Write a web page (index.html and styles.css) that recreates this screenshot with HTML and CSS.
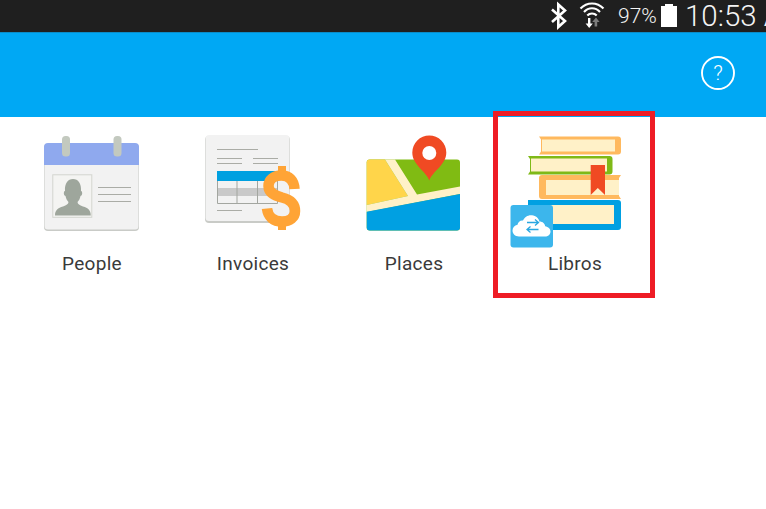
FILE: index.html
```html
<!DOCTYPE html>
<html lang="en">
<head>
<meta charset="utf-8">
<title>Apps</title>
<link rel="stylesheet" href="styles.css">
</head>
<body>
<div class="status-bar">
  <svg class="ic-bt" width="20" height="32" viewBox="548 0 20 32"><path d="M552 9.500L565 21 558.300 27V4.500L565 10.500 552 22" fill="none" stroke="#fff" stroke-width="2.600"/></svg>
  <svg class="ic-wifi" width="26" height="32" viewBox="579 0 26 32">
    <g fill="none" stroke="#fff" stroke-width="2.100">
      <path d="M580.500 8.500C587 1.800 597 1.800 603.500 8.500"/>
      <path d="M584 12C588.500 7 595.500 7 600 12"/>
      <path d="M587.300 15.500C589.800 12.800 594.200 12.800 596.700 15.500"/>
    </g>
    <path d="M588 18h2.400v5.500h2.400l-3.600 4.500-3.600-4.500h2.400z" fill="#fff"/>
    <path d="M596 17.500l3.600 4.500h-2.400v4.500h-2.600V22h-2.400z" fill="#7c7c7c"/>
  </svg>
  <span class="pct">97%</span>
  <svg class="ic-batt" width="16" height="32" viewBox="661 0 16 32"><path d="M665 4h8v2h4v21h-16V6h4z" fill="#fff"/></svg>
  <span class="clock">10:53 AM</span>
</div>
<header class="app-bar">
  <svg class="help" width="36" height="36" viewBox="0 0 36 36"><circle cx="18" cy="18" r="16" fill="none" stroke="#fff" stroke-width="1.900"/><text x="18" y="25" text-anchor="middle" class="help-mark">?</text></svg>
</header>
<main class="grid">
  <div class="tile">
    <svg class="icon" width="140" height="125" viewBox="22 125 140 125">
      <rect x="44" y="144" width="95" height="87" rx="4" fill="#c9cbc7"/>
      <path d="M44 165V147a4 4 0 0 1 4-4h87a4 4 0 0 1 4 4v18z" fill="#8fa9ee"/>
      <path d="M44.500 165h94v61a3.500 3.500 0 0 1-3.500 3.500H48a3.500 3.500 0 0 1-3.500-3.500z" fill="#f2f2f2"/>
      <rect x="62" y="136" width="8" height="20.500" rx="3.500" fill="#c3c9bf"/>
      <rect x="113.500" y="136" width="8" height="20.500" rx="3.500" fill="#c3c9bf"/>
      <rect x="52.800" y="174.800" width="39" height="42.500" fill="#f4f4f2" stroke="#d3d5cf" stroke-width="1"/>
      <path d="M55 215.500c0-5.500 3-7.500 8-9 3.500-1.200 5.300-2.500 5.500-4.500-1.500-1.500-2.500-3.500-3-6-1.500-.5-2-2.500-1.500-4 .3-.8.6-1 1-1-.5-7.500 2.800-12 8-12s8.500 4.500 8 12c.4 0 .7.200 1 1 .5 1.500 0 3.500-1.500 4-.5 2.500-1.500 4.500-3 6 .2 2 2 3.300 5.500 4.500 5 1.500 7.800 3.500 7.800 9z" fill="#9ea69c"/>
      <path d="M98 187.500h33M98 194.500h33M98 201.500h33" stroke="#aaaca6" stroke-width="1" fill="none"/>
    </svg>
    <span class="label">People</span>
  </div>
  <div class="tile">
    <svg class="icon" width="140" height="125" viewBox="183 125 140 125">
      <rect x="205" y="136" width="85" height="87" rx="4" fill="#c9cbc7"/>
      <rect x="205.500" y="135" width="84" height="86" rx="3.500" fill="#f2f2f2"/>
      <path d="M217 149.500h41M217 158.500h25M253 158.500h25M217 163.500h25M253 163.500h25M217 210.500h25" stroke="#aaaca6" stroke-width="1" fill="none"/>
      <rect x="217" y="188" width="60" height="8" fill="#c9c9c9"/>
      <rect x="217" y="171" width="60" height="10" fill="#00a0e0"/>
      <path d="M217.500 181v22.500h60V181M237 181v22.500M257.500 181v22.500" stroke="#a3a6a0" stroke-width="1" fill="none"/>
      <path d="M282 166v9M282 221v9" stroke="#ffa436" stroke-width="8" fill="none"/>
      <path d="M294.500 189C294 180 289 175.500 281.500 175.500 274 175.500 268.500 179.500 268.500 186 268.500 193 275 195.500 282 197.500 290 199.500 295 203.500 295 211 295 217.500 290 221.500 282 221.500 273.500 221.500 268 217 267 208.500" stroke="#ffa436" stroke-width="10.500" fill="none"/>
    </svg>
    <span class="label">Invoices</span>
  </div>
  <div class="tile">
    <svg class="icon" width="140" height="125" viewBox="344 125 140 125">
      <rect x="366.700" y="159.500" width="93.300" height="71" rx="3" fill="#80bb13"/>
      <path d="M366.700 205V162.500a3 3 0 0 1 3-3H385L408 196z" fill="#ffd54a"/>
      <path d="M366.700 205 408 196 385 159.500h10L417 194.500 460 186.500V194L366.700 212z" fill="#fff1c8"/>
      <path d="M366.700 211.700 460 194V227.500a3 3 0 0 1-3 3H369.700a3 3 0 0 1-3-3z" fill="#00a0e2"/>
      <path d="M429.300 180.500C426 171 412.300 165 412.300 152.500A17 17 0 0 1 446.300 152.500C446.300 165 432.500 171 429.300 180.500z" fill="#f04a23"/>
      <circle cx="429.300" cy="153" r="7" fill="#fff"/>
    </svg>
    <span class="label">Places</span>
  </div>
  <div class="tile">
    <svg class="icon" width="140" height="125" viewBox="505 125 140 125">
      <path d="M539 136.500h79a3 3 0 0 1 3 3v12a3 3 0 0 1-3 3h-79l2-3v-12z" fill="#ffb95e"/>
      <rect x="542" y="139.500" width="73" height="12" fill="#fff1c8"/>
      <path d="M528 156h81.500a3 3 0 0 1 3 3v12.500a3 3 0 0 1-3 3H528l2-3V159z" fill="#7fb917"/>
      <rect x="531" y="158.500" width="76" height="13" fill="#fff1c8"/>
      <path d="M621 175H542a3 3 0 0 0-3 3v18a3 3 0 0 0 3 3h79l-2-3v-18z" fill="#ffb95e"/>
      <rect x="546" y="180" width="73" height="15" fill="#fff1c8"/>
      <path d="M528 200h90a3 3 0 0 1 3 3v24a3 3 0 0 1-3 3h-90z" fill="#00a0e2"/>
      <rect x="548" y="205" width="66" height="19" fill="#fff1c8"/>
      <path d="M590.700 165H605V195L597.800 188 590.700 195z" fill="#f04a23"/>
      <rect x="510.500" y="205" width="42.500" height="42.500" rx="3" fill="#3cb6ec"/>
      <path d="M519 236.500c-4 0-6.500-2.800-6.500-6 0-3 2-5.200 5-5.800.6-3 3-4.700 5.500-4.200 1.500-3.500 5-5.800 9-5.300 3.800.4 6.800 3 7.500 6.500.5-.1 1-.1 1.500 0 2.500.5 4 2.400 4.200 4.500 3 .5 5.300 2.500 5.300 5.300 0 3-2.500 5-5.500 5z" fill="#fff"/>
      <path d="M527 222.500h11.500M535 219.500l3.500 3-3.500 3M538.500 229.500H527M530.500 226.500l-3.500 3 3.500 3" stroke="#29a7e1" stroke-width="1.300" fill="none"/>
    </svg>
    <span class="label">Libros</span>
  </div>
</main>
<div class="highlight"></div>
</body>
</html>
```
FILE: styles.css
```css
html, body {
  margin: 0;
  padding: 0;
  height: 100%;
  overflow: hidden;
  background: #fff;
  font-family: Roboto, "Liberation Sans", sans-serif;
}
body { position: relative; }

.status-bar {
  height: 32px;
  background: #1f1f1f;
  display: flex;
  align-items: center;
  padding-left: 548px;
  overflow: hidden;
  color: #f4f4f4;
  white-space: nowrap;
}
.status-bar svg { flex: none; display: block; }
.ic-wifi { margin-left: 11px; }
.pct { margin-left: 13px; width: 43px; flex: none; font-size: 21px; font-weight: 300; }
.clock { margin-left: 8px; flex: none; font-size: 29.5px; font-weight: 300; }

.app-bar {
  height: 84px;
  border-top: 1px solid #0a8cc8;
  background: #00a8f4;
  display: flex;
  align-items: center;
  justify-content: flex-end;
  padding-right: 30px;
}
.help { display: block; margin-top: -4px; }
.help-mark { fill: #fff; font-size: 21px; font-weight: 300; font-family: Roboto, sans-serif; }

.grid {
  display: grid;
  grid-template-columns: repeat(4, 161px);
  padding: 8px 0 0 11.5px;
}
.tile {
  display: flex;
  flex-direction: column;
  align-items: center;
}
.icon { display: block; filter: blur(0.4px); }
.label {
  font-size: 19px;
  line-height: 22px;
  letter-spacing: 0.3px;
  color: #3a3a3a;
  margin-top: 3px;
}
.highlight {
  position: absolute;
  left: 493px;
  top: 111px;
  width: 152px;
  height: 177px;
  border: 5px solid #ee1c25;
}
```
